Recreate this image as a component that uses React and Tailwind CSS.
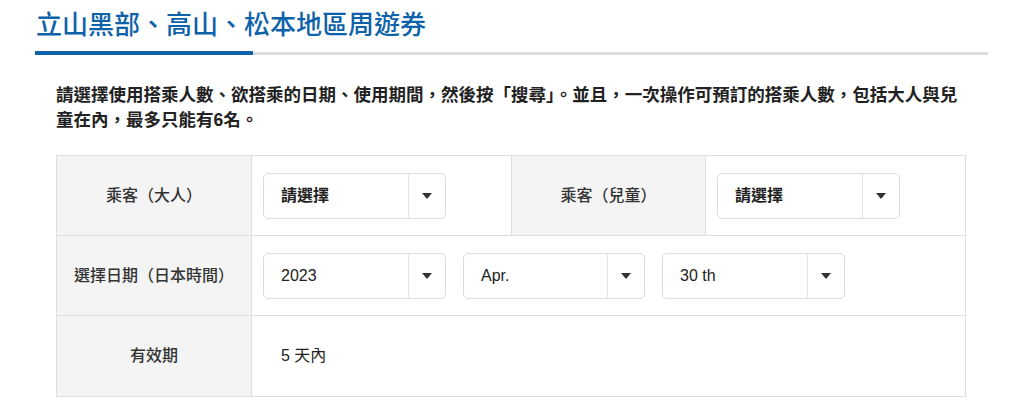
import React from "react";

const font = { fontFamily: '"Liberation Sans", "Noto Sans CJK TC", sans-serif' };

function Caret() {
  return (
    <svg width="10" height="6" viewBox="0 0 10 6" className="block">
      <path d="M0 0 L10 0 L5 6 Z" fill="#333" />
    </svg>
  );
}

function Select({ value, bold, w = "w-[183px]" }) {
  return (
    <div className={`${w} h-[46px] flex items-stretch border border-[#dcdcdc] rounded-[5px] bg-white`}>
      <div className={`flex-1 flex items-center pl-[17px] text-[16px] text-[#222] ${bold ? "font-bold" : "font-normal"}`}>
        {value}
      </div>
      <div className="w-[37px] border-l border-[#e2e2e2] flex items-center justify-center">
        <Caret />
      </div>
    </div>
  );
}

function Label({ children, className = "" }) {
  return (
    <div className={`bg-[#f4f4f4] flex items-center justify-center text-[16px] font-medium text-[#333] border-r border-[#dedede] ${className}`}>
      {children}
    </div>
  );
}

export default function App() {
  return (
    <div className="w-[1024px] h-[418px] bg-white overflow-hidden" style={font}>
      <div className="ml-[35px] w-[953px] pt-[9px]">
        <h1 className="text-[26px] leading-[32px] text-[#0d62aa] font-medium pl-[1px]">
          立山黑部、高山、松本地區周遊券
        </h1>
        <div className="mt-[10px] flex items-end">
          <div className="w-[218px] h-[4px] bg-[#0d62aa]" />
          <div className="flex-1 h-[3px] bg-[#dcdcdc]" />
        </div>
      </div>
      <div className="ml-[56px] w-[910px]">
        <p className="mt-[28px] w-[915px] text-[17.5px] leading-[25px] font-bold text-[#222]">
          請選擇使用搭乘人數、欲搭乘的日期、使用期間，然後按「搜尋」。並且，一次操作可預訂的搭乘人數，包括大人與兒童在內，最多只能有6名。
        </p>
        <div className="mt-[22px] grid grid-cols-[195px_259px_195px_261px] border border-[#dedede]">
          <Label className="h-[80px] border-b">乘客（大人）</Label>
          <div className="h-[80px] border-b border-[#dedede] flex items-center pl-[11px]">
            <Select value="請選擇" bold />
          </div>
          <Label className="h-[80px] border-b border-l">乘客（兒童）</Label>
          <div className="h-[80px] border-b border-[#dedede] flex items-center pl-[11px]">
            <Select value="請選擇" bold />
          </div>

          <Label className="h-[80px] border-b">選擇日期（日本時間）</Label>
          <div className="col-span-3 h-[80px] border-b border-[#dedede] flex items-center pl-[11px] gap-[17px]">
            <Select value="2023" />
            <Select value="Apr." w="w-[182px]" />
            <Select value="30 th" />
          </div>

          <Label className="h-[80px]">有效期</Label>
          <div className="col-span-3 h-[80px] flex items-center pl-[29px] text-[16px] text-[#222]">
            5 天內
          </div>
        </div>
      </div>
    </div>
  );
}
